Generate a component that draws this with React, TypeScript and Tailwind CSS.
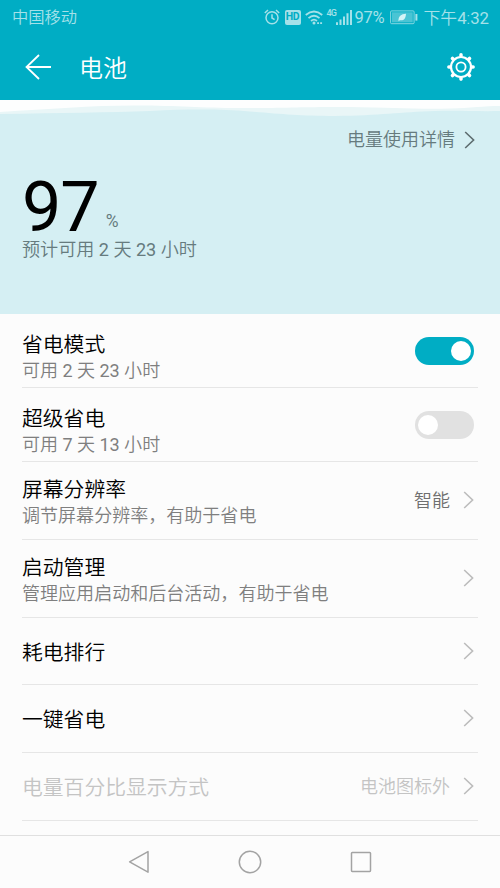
import React from 'react';
import clsx from 'clsx';

interface SettingRow {
  title: string;
  subtitle?: string;
  value?: string;
  toggle?: boolean;
  disabled?: boolean;
  className: string;
}

const rows: SettingRow[] = [
  { title: '省电模式', subtitle: '可用 2 天 23 小时', toggle: true, className: 'h-[73px] pt-[18px]' },
  { title: '超级省电', subtitle: '可用 7 天 13 小时', toggle: false, className: 'h-[73px] pt-[18px]' },
  { title: '屏幕分辨率', subtitle: '调节屏幕分辨率，有助于省电', value: '智能', className: 'h-[77px] pt-[15px]' },
  { title: '启动管理', subtitle: '管理应用启动和后台活动，有助于省电', className: 'h-[77px] pt-[15px]' },
  { title: '耗电排行', className: 'h-[66px] pt-[22px]' },
  { title: '一键省电', className: 'h-[67px] pt-[22px]' },
  { title: '电量百分比显示方式', value: '电池图标外', disabled: true, className: 'h-[67px] pt-[22px]' },
];

// Digits are set one step heavier than the Chinese text around them
const MixedText: React.FC<{ text: string }> = ({ text }) => (
  <>
    {text.split(/(\d+)/).map((part, i) =>
      /^\d+$/.test(part) ? (
        <span key={i} className="font-normal">
          {part}
        </span>
      ) : (
        part
      )
    )}
  </>
);

const Chevron: React.FC<{ className?: string }> = ({ className }) => (
  <svg className={clsx('h-[18px] w-[11px]', className)} viewBox="0 0 11 18" fill="none" stroke="currentColor" strokeWidth="1.6">
    <path d="M1.2 1L9.6 9L1.2 17" />
  </svg>
);

const Toggle: React.FC<{ on: boolean }> = ({ on }) => (
  <div className={clsx('flex h-7 w-[59px] items-center rounded-full px-[3px]', on ? 'justify-end bg-[#00adc4]' : 'bg-[#e1e1e1]')}>
    <div className="h-5 w-5 rounded-full bg-white" />
  </div>
);

const StatusBar: React.FC = () => (
  <div className="flex h-[34px] items-center justify-between pr-[11px] pl-3 text-[#a5e1e9]">
    <span className="pt-0.5 text-[16.3px] leading-8 font-[350]">中国移动</span>
    <div className="flex items-center">
      {/* Alarm */}
      <svg className="h-4 w-4" viewBox="0 0 16 16" fill="none" stroke="currentColor" strokeWidth="1.5">
        <circle cx="8" cy="8.8" r="6" />
        <path d="M8 5.2v3.8l2.6 1.6M.8 4L4 1M15.2 4L12 1" />
      </svg>
      <div className="ml-[5px] flex h-[15px] w-4 items-center justify-center rounded-[2px] bg-[#a5e1e9] text-[10.5px] leading-none font-bold tracking-[-0.3px] text-[#00adc4]">
        HD
      </div>
      {/* Wifi */}
      <svg className="ml-[4px] h-[15px] w-[18px]" viewBox="0 0 19 15" fill="none" stroke="currentColor" strokeWidth="1.9">
        <path d="M.8 4.8Q9.5-2.4 18.2 4.8M3.7 8.2Q9.5 3 15.3 8.2M6.4 11.2Q9.5 8.2 12.6 11.2" />
        <circle cx="9.5" cy="13.2" r="1.6" fill="currentColor" stroke="none" />
        <path d="M12.8 13.4h2M16 13.4h2" />
      </svg>
      <span className="mb-2 ml-1 w-[9px] text-[9px] leading-none font-medium tracking-[-1px]">4G</span>
      {/* Signal */}
      <svg className="h-[15px] w-4" viewBox="0 0 16 15" fill="currentColor">
        <path d="M0 12.3h2V15H0zM3.5 9.5h2V15h-2zM7 6.5h2V15H7zM10.5 3.2h2V15h-2zM14 0h2v15h-2z" />
      </svg>
      <span className="ml-[3px] w-8 pt-0.5 text-[16.5px] leading-8 tracking-[-0.3px]">97%</span>
      {/* Battery */}
      <svg className="ml-[3px] h-[15px] w-7" viewBox="0 0 28 15" fill="none" stroke="currentColor">
        <rect x=".6" y=".9" width="23.5" height="12.8" rx="1" strokeWidth="1" strokeOpacity=".8" />
        <rect x="2" y="2.3" width="20.7" height="10" fill="currentColor" fillOpacity=".45" stroke="none" />
        <path d="M26.4 4v6.6" strokeWidth="2" />
        <path d="M8.5 11.2C8.2 6.2 11 4.2 16 3.8C15.8 8.8 13.5 11 9.8 10.2z" fill="#d4f4f7" stroke="none" />
      </svg>
      <span className="ml-1.5 pt-0.5 text-[16.8px] leading-8 font-[350]">
        <MixedText text="下午4:32" />
      </span>
    </div>
  </div>
);

const Header: React.FC = () => (
  <header className="h-[100px] bg-[#00adc4]">
    <StatusBar />
    <div className="flex h-[66px] items-center pr-[25px] pl-[25px] text-white">
      <svg className="h-[26px] w-[26px]" viewBox="0 0 26 26" fill="none" stroke="currentColor" strokeWidth="1.8">
        <path d="M14 1L1.5 13L14 25M1.5 13H26" />
      </svg>
      <h1 className="mt-[3px] ml-7 flex-1 text-[24px] leading-8 font-[350]">电池</h1>
      {/* Gear */}
      <svg className="h-7 w-7" viewBox="0 0 28 28" fill="none" stroke="currentColor">
        <circle cx="14" cy="14" r="10" strokeWidth="2.2" />
        <circle cx="14" cy="14" r="4.6" strokeWidth="1.8" />
        <path
          d="M14 2.6V1.9M14 25.4v.7M2.6 14h-.7M25.4 14h.7M6 6l-.5-.5M22 6l.5-.5M6 22l-.5.5M22 22l.5.5"
          strokeWidth="3.6"
          strokeLinecap="round"
        />
      </svg>
    </div>
  </header>
);

const BatteryPanel: React.FC = () => (
  <section className="h-[214px] bg-[#d5eff3]">
    {/* Waves */}
    <svg className="block h-[18px] w-full" viewBox="0 0 500 18" preserveAspectRatio="none">
      <path d="M0 0H500V18H0z" fill="#fdfefe" />
      <path d="M0 12C50 9 90 5.5 135 5.5C180 5.5 200 8 240 8C290 8 310 6.5 350 7C390 7.5 420 9.5 450 8.5C470 8 485 6 500 6V18H0z" fill="#e9f6f7" />
      <path d="M0 14C60 13 110 12.5 150 11C190 9 220 9 250 11.5C280 14 300 16 335 16C380 15.5 400 12 435 11C460 10.5 480 11.5 500 11V18H0z" fill="#d5eff3" />
    </svg>
    <div className="flex h-[43px] items-center justify-end pr-[25px] text-[#667b7e]">
      <span className="pt-px text-[18px] leading-none font-[350]">电量使用详情</span>
      <Chevron className="ml-[9px] text-[#5d6c6f]" />
    </div>
    <div className="flex h-[76px] items-start pl-[22px]">
      <span className="mt-[11px] text-[70px] leading-[70px] tracking-[-1px] text-black">97</span>
      <span className="mt-[50px] ml-[7px] text-[17.5px] leading-5 text-[#667b7e]">%</span>
    </div>
    <p className="pl-[22px] text-[18.1px] leading-[26px] font-[350] text-[#667b7e]">
      <MixedText text="预计可用 2 天 23 小时" />
    </p>
  </section>
);

const Row: React.FC<{ row: SettingRow }> = ({ row }) => (
  <li className="flex border-b border-[#e6e6e6]">
    <div className={clsx('flex-1', row.className)}>
      <p className={clsx('text-[20.8px] leading-[26px] font-[350]', row.disabled ? 'text-[#c4c4c4]' : 'text-black')}>{row.title}</p>
      {row.subtitle && (
        <p className="text-[18.05px] leading-[26px] font-[350] text-[#7f7f7f]">
          <MixedText text={row.subtitle} />
        </p>
      )}
    </div>
    <div className="flex items-center pr-1">
      {row.value && (
        <span className={clsx('mr-[13px] pt-px text-[18px] leading-[26px] font-[350]', row.disabled ? 'text-[#c4c4c4]' : 'text-[#6f6f6f]')}>
          {row.value}
        </span>
      )}
      {row.toggle !== undefined ? <Toggle on={row.toggle} /> : <Chevron className="mb-px text-[#bcbcbc]" />}
    </div>
  </li>
);

const NavBar: React.FC = () => (
  <nav className="flex h-[53px] items-center justify-between border-t border-[#e0e0e0] pr-[128px] pl-[128px] text-[#a3a3a3]">
    <svg className="h-6 w-[22px]" viewBox="0 0 22 24" fill="none" stroke="currentColor" strokeWidth="1.5" strokeLinejoin="round">
      <path d="M20 1.6V22.2L1.6 11.9z" />
    </svg>
    <svg className="h-6 w-6" viewBox="0 0 24 24" fill="none" stroke="currentColor" strokeWidth="1.5">
      <circle cx="12" cy="12" r="10.7" />
    </svg>
    <svg className="h-6 w-[22px]" viewBox="0 0 22 24" fill="none" stroke="currentColor" strokeWidth="1.5">
      <rect x="1.5" y="2.4" width="19" height="19" rx=".8" />
    </svg>
  </nav>
);

const App: React.FC = () => {
  return (
    <div className="flex h-[888px] w-[500px] flex-col overflow-hidden bg-[#fcfcfc] font-['Roboto','Noto_Sans_CJK_SC',sans-serif]">
      <Header />
      <BatteryPanel />
      <ul className="flex-1 px-[22px]">
        {rows.map((row) => (
          <Row key={row.title} row={row} />
        ))}
      </ul>
      <NavBar />
    </div>
  );
};

export default App;
